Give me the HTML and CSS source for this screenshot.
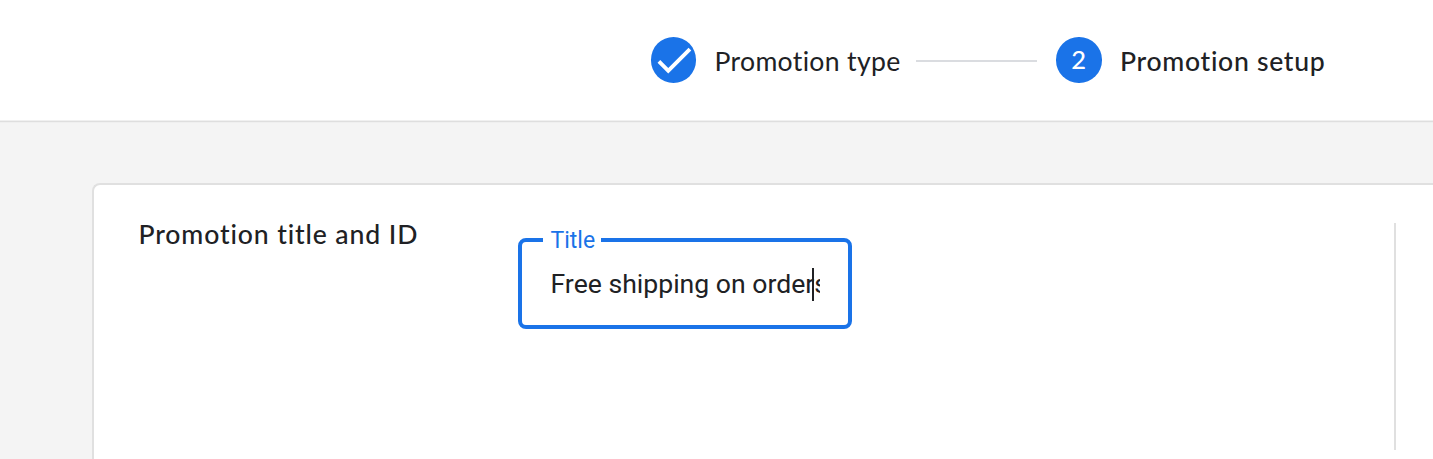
FILE: index.html
```html
<!DOCTYPE html>
<html lang="en">
<head>
<meta charset="utf-8">
<title>Promotion setup</title>
<link rel="stylesheet" href="styles.css">
</head>
<body>
<header class="stepper">
  <div class="step">
    <span class="step-badge"><svg class="check" viewBox="0 0 24 24"><path fill="#fff" d="M9 16.17 4.83 12l-1.42 1.41L9 19 21 7l-1.41-1.41z"/></svg></span>
    <span class="step-label done">Promotion type</span>
  </div>
  <span class="step-line"></span>
  <div class="step">
    <span class="step-badge number">2</span>
    <span class="step-label active">Promotion setup</span>
  </div>
</header>
<main class="page">
  <section class="card">
    <h2 class="card-title"><span>Promotion title and ID</span></h2>
    <div class="field">
      <span class="field-label">Title</span>
      <div class="field-value">Free shipping on orders<span class="caret"></span></div>
    </div>
    <div class="divider"></div>
  </section>
</main>
</body>
</html>
```

FILE: styles.css
```css
* { box-sizing: border-box; }
body {
  margin: 0;
  height: 459px;
  overflow: hidden;
  display: flex;
  flex-direction: column;
  background: #f4f4f4;
  color: #202124;
  font-family: Lato, sans-serif;
  font-variant-ligatures: none;
}
.stepper {
  flex: none;
  height: 122px;
  padding: 37px 0 0 650.5px;
  display: flex;
  align-items: flex-start;
  background: #fff;
  border-bottom: 1px solid #dedede;
  box-shadow: inset 0 -1px #f0f0f0, 0 1px #efefef;
}
.step { display: flex; height: 46px; }
.step-badge {
  flex: none;
  width: 45.5px;
  height: 45.5px;
  border-radius: 50%;
  background: #1a73e8;
  color: #fff;
  font-size: 25.5px;
  line-height: 45px;
  text-align: center;
}
.number { font-weight: 500; }
.check { display: block; width: 46px; height: 46px; }
.step-label {
  margin-left: 18.5px;
  font-size: 26.6px;
  line-height: 48px;
  white-space: nowrap;
}
.done { width: 185.5px; letter-spacing: 0.33px; }
.active { font-weight: 500; letter-spacing: 0.7px; }
.step-line {
  flex: none;
  width: 121px;
  height: 2px;
  margin: 23px 19px 0 16px;
  background: #dadce0;
}
.page { flex: 1; padding: 61px 0 0 92px; }
.card {
  height: 290px;
  display: flex;
  background: #fff;
  border: 2px solid #e0e0e0;
  border-right: 0;
  border-radius: 8px 0 0 0;
}
.card-title {
  width: 424px;
  margin: 0;
  padding: 32px 0 0 44.5px;
  font-size: 26.6px;
  font-weight: 500;
  line-height: 34px;
  letter-spacing: 0.88px;
  white-space: nowrap;
}
.field {
  position: relative;
  width: 334px;
  height: 91px;
  margin-top: 53px;
  padding: 24px 28px 0 28.5px;
  border: 4px solid #1a73e8;
  border-radius: 8px;
  font-family: Roboto, sans-serif;
}
.field-label {
  position: absolute;
  left: 21px;
  top: -15px;
  width: 58px;
  padding-left: 7.5px;
  background: #fff;
  color: #1a73e8;
  font-size: 23px;
  line-height: 28px;
}
.field-value {
  position: relative;
  width: 269.5px;
  height: 36px;
  overflow: hidden;
  font-size: 26.6px;
  line-height: 36px;
  white-space: nowrap;
}
.caret {
  position: absolute;
  left: 261.5px;
  top: 2px;
  width: 2px;
  height: 33px;
  background: #202124;
}
.divider {
  width: 2px;
  height: 227px;
  margin: 38px 0 0 542px;
  background: #e0e0e0;
}
```
